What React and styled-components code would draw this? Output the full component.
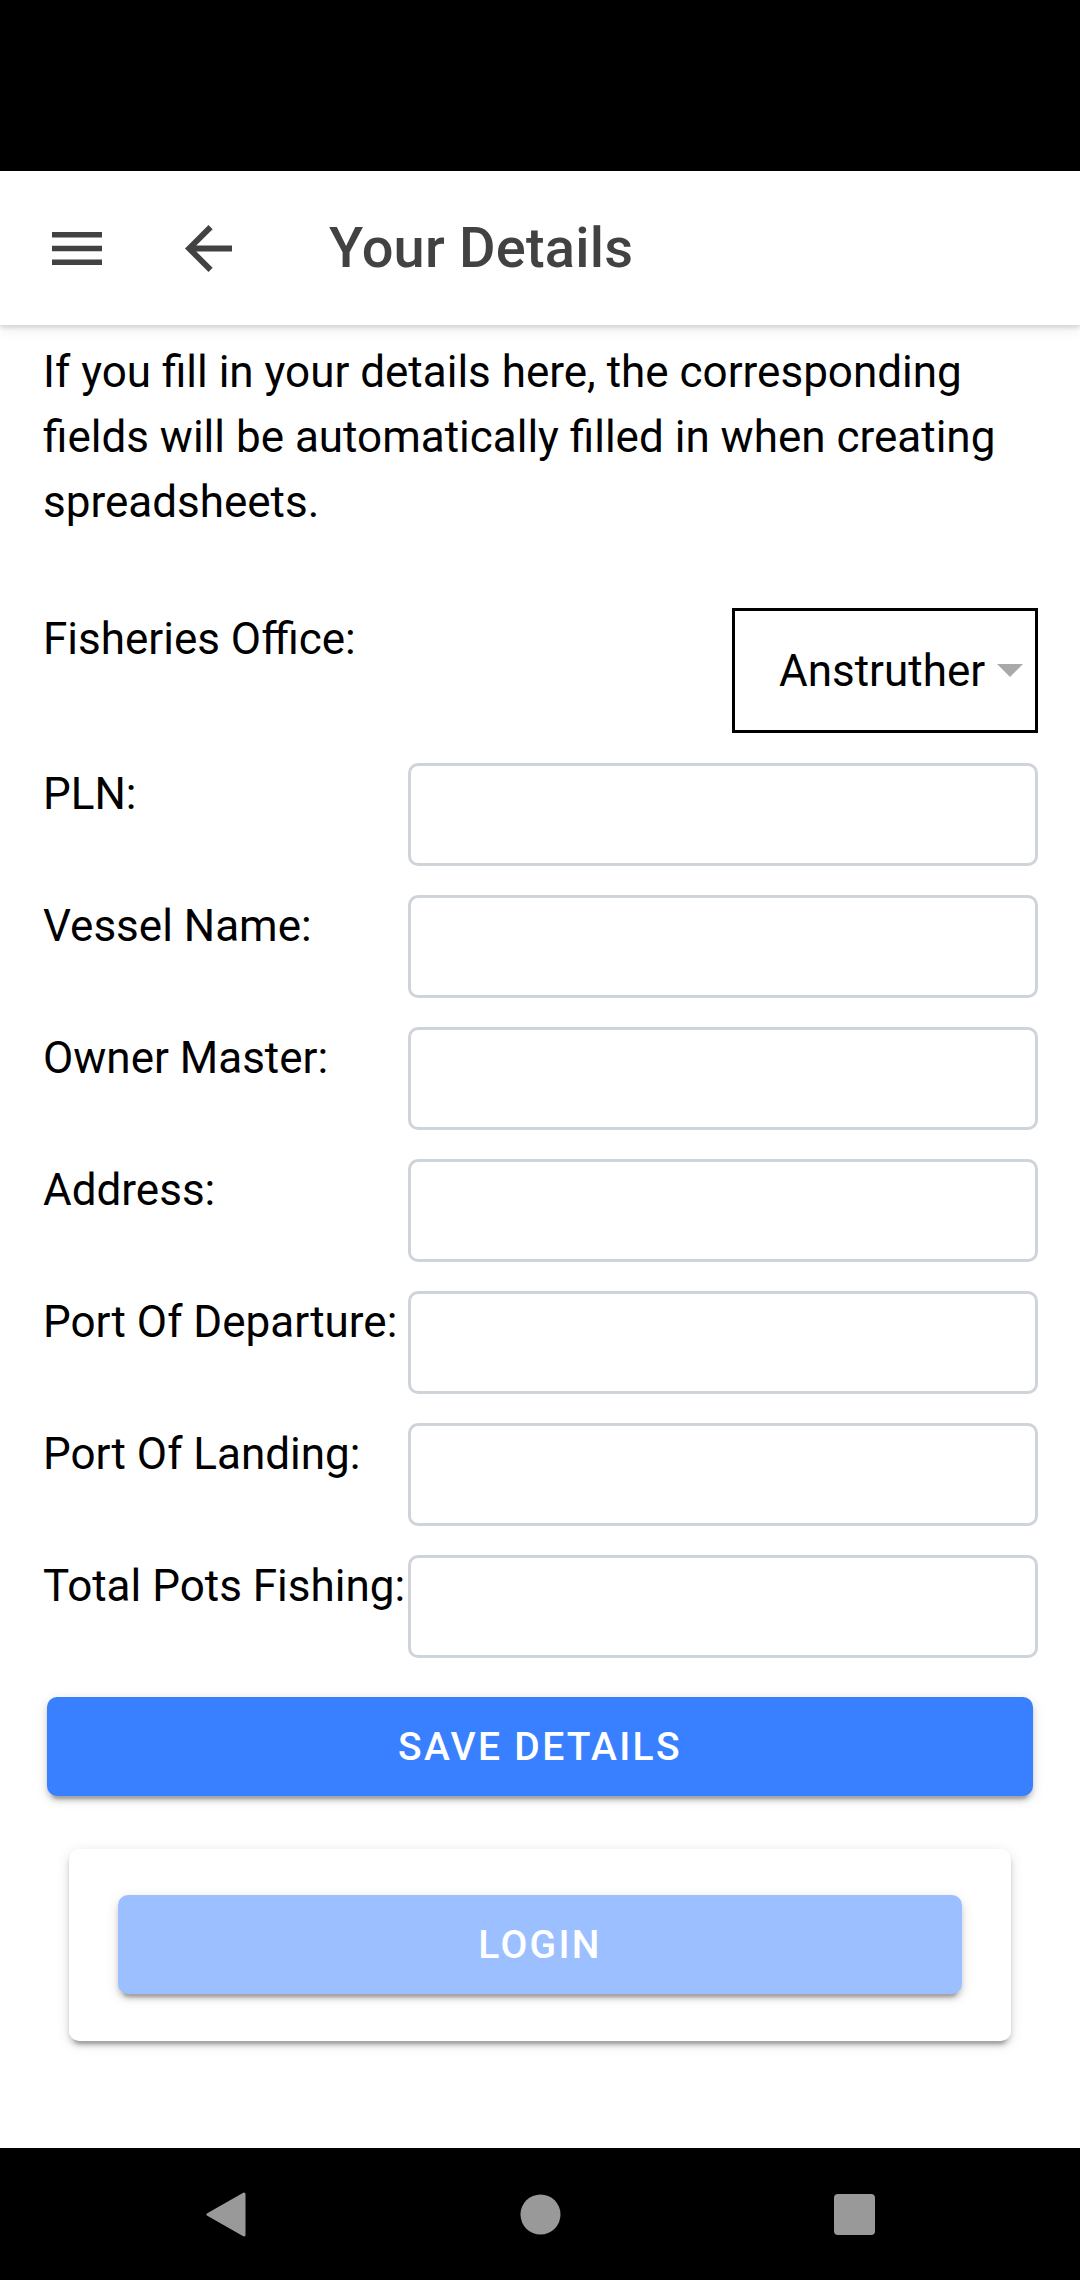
import React from "react";
import styled, { createGlobalStyle } from "styled-components";

const GlobalStyle = createGlobalStyle`
  html, body {
    margin: 0;
    padding: 0;
    background: #ffffff;
  }
  body {
    font-family: Roboto, "Liberation Sans", Arial, sans-serif;
    -webkit-font-smoothing: antialiased;
  }
  * { box-sizing: border-box; }
`;

const Screen = styled.div`
  display: flex;
  flex-direction: column;
  width: 1080px;
  height: 2280px;
  background: #ffffff;
  overflow: hidden;
`;

const StatusBar = styled.div`
  height: 171px;
  flex: none;
  background: #000000;
`;

const Header = styled.header`
  position: relative;
  z-index: 2;
  flex: none;
  height: 154px;
  display: flex;
  align-items: center;
  padding-left: 52px;
  background: #ffffff;
  box-shadow: 0 3px 4px rgba(0, 0, 0, 0.12), 0 6px 12px rgba(0, 0, 0, 0.06);
`;

const HeaderIcon = styled.svg`
  flex: none;
  display: block;
  fill: #424242;
  margin-left: ${(p) => p.$offset || 0}px;
`;

const Title = styled.h1`
  margin: 0 0 0 97px;
  font-family: Roboto, "Liberation Sans", Arial, sans-serif;
  font-size: 56px;
  font-weight: 500;
  color: #424242;
  letter-spacing: 0.2px;
`;

const Content = styled.main`
  flex: 1;
  display: flex;
  flex-direction: column;
  padding: 15px 42px 0 43px;
`;

const Intro = styled.p`
  margin: 0;
  font-size: 44px;
  line-height: 65px;
  color: #000000;
`;

const Form = styled.div`
  display: grid;
  grid-template-columns: 365px 1fr;
  row-gap: 29px;
  margin-top: 73px;
`;

const Label = styled.label`
  font-size: 44px;
  line-height: 49px;
  padding-top: 7px;
  color: #000000;
  white-space: nowrap;
`;

const SelectBox = styled.div`
  justify-self: end;
  width: 306px;
  height: 125px;
  margin-bottom: 1px;
  display: flex;
  align-items: center;
  padding-left: 44px;
  border: 3px solid #000000;
  background: #ffffff;
  font-size: 44px;
  color: #000000;
`;

const SelectText = styled.span`
  flex: 1;
`;

const Caret = styled.span`
  width: 0;
  height: 0;
  margin-right: 12px;
  border-left: 13px solid transparent;
  border-right: 13px solid transparent;
  border-top: 13px solid #a9a9a9;
`;

const TextInput = styled.input`
  width: 100%;
  height: 103px;
  margin: 0;
  padding: 0 20px;
  border: 3px solid #cfd4da;
  border-radius: 10px;
  background: #ffffff;
  font-family: inherit;
  font-size: 44px;
  outline: none;
`;

const Button = styled.button`
  display: block;
  width: 100%;
  height: 99px;
  border: none;
  border-radius: 10px;
  background: ${(p) => (p.$disabled ? "#9cc0ff" : "#3880ff")};
  color: #ffffff;
  font-family: Roboto, "Liberation Sans", Arial, sans-serif;
  font-size: 39px;
  font-weight: 500;
  letter-spacing: 2.3px;
  text-transform: uppercase;
  box-shadow: 0 8px 3px -5px rgba(0, 0, 0, 0.2), 0 5px 5px 0 rgba(0, 0, 0, 0.14),
    0 3px 13px 0 rgba(0, 0, 0, 0.12);
  cursor: pointer;
`;

const SaveWrap = styled.div`
  margin: 39px 5px 0 4px;
`;

const Card = styled.section`
  margin: 53px 27px 0 26px;
  padding: 46px 49px 47px;
  border-radius: 10px;
  background: #ffffff;
  box-shadow: 0 8px 3px -5px rgba(0, 0, 0, 0.2), 0 5px 5px 0 rgba(0, 0, 0, 0.14),
    0 3px 13px 0 rgba(0, 0, 0, 0.12);
`;

const NavBar = styled.nav`
  flex: none;
  height: 132px;
  display: grid;
  grid-template-columns: repeat(3, 1fr);
  align-items: center;
  justify-items: center;
  padding: 0 69px;
  background: #000000;
`;

const NavIcon = styled.svg`
  display: block;
  fill: #999999;
`;

const fields = [
  "PLN:",
  "Vessel Name:",
  "Owner Master:",
  "Address:",
  "Port Of Departure:",
  "Port Of Landing:",
  "Total Pots Fishing:",
];

export default function App() {
  return (
    <Screen>
      <GlobalStyle />
      <StatusBar />
      <Header>
        <HeaderIcon width="50" height="33" viewBox="3 6 18 12" preserveAspectRatio="none">
          <path d="M3 18h18v-2H3v2zm0-5h18v-2H3v2zm0-7v2h18V6H3z" />
        </HeaderIcon>
        <HeaderIcon $offset={83} width="47" height="47" viewBox="4 4 16 16">
          <path d="M20 11H7.83l5.59-5.59L12 4l-8 8 8 8 1.41-1.41L7.83 13H20v-2z" />
        </HeaderIcon>
        <Title>Your Details</Title>
      </Header>
      <Content>
        <Intro>
          If you fill in your details here, the corresponding fields will be
          automatically filled in when creating spreadsheets.
        </Intro>
        <Form>
          <Label>Fisheries Office:</Label>
          <SelectBox>
            <SelectText>Anstruther</SelectText>
            <Caret />
          </SelectBox>
          {fields.map((f) => (
            <React.Fragment key={f}>
              <Label>{f}</Label>
              <TextInput type="text" />
            </React.Fragment>
          ))}
        </Form>
        <SaveWrap>
          <Button>Save Details</Button>
        </SaveWrap>
        <Card>
          <Button $disabled>Login</Button>
        </Card>
      </Content>
      <NavBar>
        <NavIcon width="40" height="47" viewBox="0 0 40 47">
          <path
            d="M38 3 L2 23.5 L38 44 Z"
            stroke="#999999"
            strokeWidth="3"
            strokeLinejoin="round"
          />
        </NavIcon>
        <NavIcon width="41" height="41" viewBox="0 0 41 41">
          <circle cx="20.5" cy="20.5" r="20" />
        </NavIcon>
        <NavIcon width="41" height="41" viewBox="0 0 41 41">
          <rect x="0" y="0" width="41" height="41" rx="4" />
        </NavIcon>
      </NavBar>
    </Screen>
  );
}
